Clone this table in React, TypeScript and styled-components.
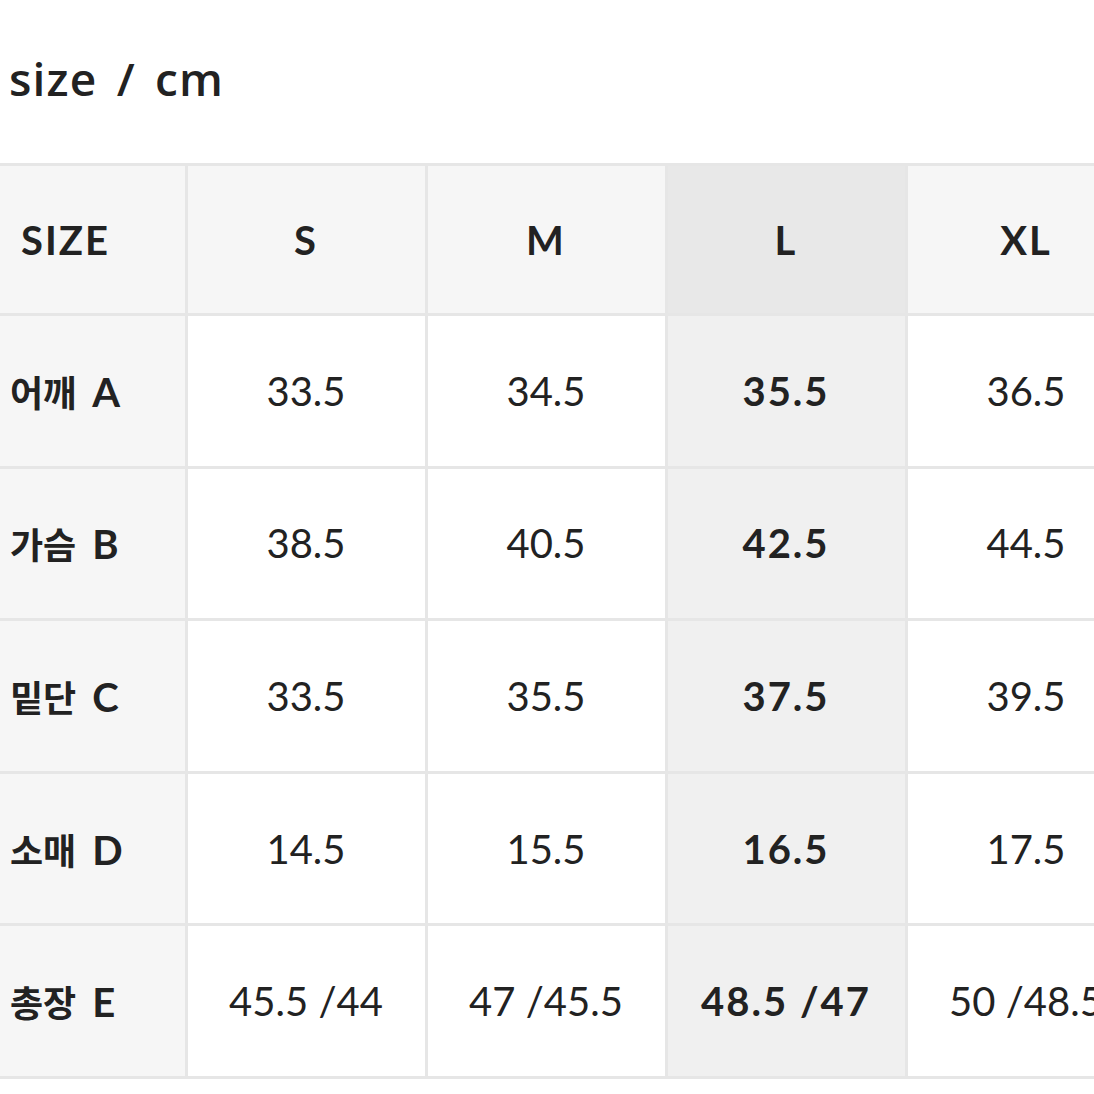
import React from "react";
import styled, { createGlobalStyle } from "styled-components";

const Global = createGlobalStyle`
  html, body { margin: 0; padding: 0; background: #fff; }
  body { font-family: Lato, "Noto Sans CJK KR", sans-serif; color: #222; overflow: hidden; }
`;

const Page = styled.div`
  width: 1094px;
  height: 1094px;
  overflow: hidden;
`;

const Title = styled.h1`
  margin: 0;
  padding: 49px 0 0 9px;
  height: 111px;
  box-sizing: border-box;
  font-family: "Open Sans", "Noto Sans CJK KR", sans-serif;
  font-weight: 600;
  font-size: 46px;
  line-height: 58px;
  letter-spacing: 1.2px;
  word-spacing: 6px;
  color: #222;
  white-space: pre;
`;

const Table = styled.table`
  border-collapse: collapse;
  table-layout: fixed;
  width: 1147px;
  margin-top: 52px;
`;

const Col = styled.col<{ $w: number }>`
  width: ${(p) => p.$w}px;
`;

const Cell = styled.td<{ $head?: boolean; $first?: boolean; $hl?: boolean }>`
  border: 3px solid #e6e6e6;
  padding: 0;
  font-family: Lato, "Noto Sans CJK KR", sans-serif;
  font-size: 40px;
  color: #222;
  text-align: ${(p) => (p.$first ? "left" : "center")};
  padding-left: ${(p) => (p.$first ? (p.$head ? "21px" : "10px") : "0")};
  font-weight: ${(p) => (p.$head || p.$first || p.$hl ? 700 : 400)};
  background: ${(p) =>
    p.$hl ? (p.$head ? "#e8e8e8" : "#f0f0f0") : p.$head || p.$first ? "#f6f6f6" : "#fff"};
  letter-spacing: ${(p) => (p.$head || p.$hl ? "2px" : "0")};
  white-space: nowrap;
  &:first-child { border-left: none; }
`;

const Kor = styled.span`
  font-family: "Noto Sans CJK KR", sans-serif;
  font-weight: 700;
  font-size: 36px;
  margin-right: 16px;
`;

const Row = styled.tr<{ $head?: boolean }>`
  height: ${(p) => (p.$head ? "150px" : "152.6px")};
`;

const sizes = ["S", "M", "L", "XL"];
const colWidths = [186, 240, 240, 240, 240];
const rows: [string, string, string[]][] = [
  ["어깨", "A", ["33.5", "34.5", "35.5", "36.5"]],
  ["가슴", "B", ["38.5", "40.5", "42.5", "44.5"]],
  ["밑단", "C", ["33.5", "35.5", "37.5", "39.5"]],
  ["소매", "D", ["14.5", "15.5", "16.5", "17.5"]],
  ["총장", "E", ["45.5 /44", "47 /45.5", "48.5 /47", "50 /48.5"]],
];

export default function App() {
  return (
    <Page>
      <Global />
      <Title>size / cm</Title>
      <Table>
        <colgroup>
          {colWidths.map((w, i) => (
            <Col key={i} $w={w} />
          ))}
        </colgroup>
        <tbody>
          <Row $head>
            <Cell as="th" $head $first>SIZE</Cell>
            {sizes.map((s) => (
              <Cell as="th" key={s} $head $hl={s === "L"}>{s}</Cell>
            ))}
          </Row>
          {rows.map(([kor, letter, vals]) => (
            <Row key={kor}>
              <Cell $first>
                <Kor>{kor}</Kor>
                {letter}
              </Cell>
              {vals.map((v, i) => (
                <Cell key={i} $hl={i === 2}>{v}</Cell>
              ))}
            </Row>
          ))}
        </tbody>
      </Table>
    </Page>
  );
}
